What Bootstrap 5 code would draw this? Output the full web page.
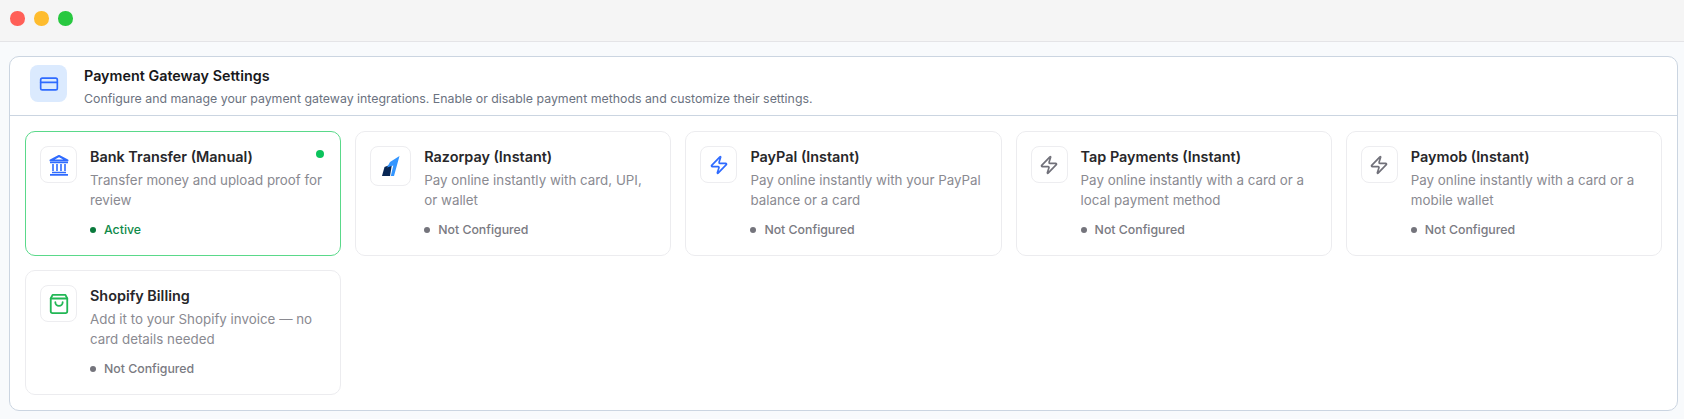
<!DOCTYPE html>
<html lang="en">
<head>
<meta charset="utf-8">
<title>Payment Gateway Settings</title>
<link href="https://cdn.jsdelivr.net/npm/bootstrap@5.3.0/dist/css/bootstrap.min.css" rel="stylesheet">
<style>
html,body{height:419px;overflow:hidden}
body{font-family:Inter,"Liberation Sans",sans-serif;background:#f8fafc;color:#1e1e24}
.chrome-bar{height:42px;background:#f5f5f5;border-bottom:1px solid #e4e4e7;padding:11px 0 0 10px;gap:9.500px}
.light{width:14.5px;height:14.5px;border-radius:50%}
.l-red{background:#ff5f57}.l-yellow{background:#febc2e}.l-green{background:#28c840}
.shell{margin:14px 6px 0 9px;height:355px;background:#fff;border:1px solid #cbd5e1;border-radius:10px;overflow:hidden}
.shell-head{height:59px;border-bottom:1px solid #cbd5e1;padding:8px 20px 0;gap:17px}
.head-icon{width:37px;height:37px;border-radius:8px;background:#dbeafe;color:#2f6bff;flex:none}
.head-title{font-size:14.35px;font-weight:600;line-height:20px;color:#18181b;margin-top:1px}
.head-desc{font-size:12.35px;line-height:18px;color:#6b7280;margin-top:4px}
.gw-grid{display:grid;grid-template-columns:repeat(5,1fr);gap:14px;padding:15px}
.gw{height:125px;border:1px solid #ececef;border-radius:10px;padding:14px;gap:13px;position:relative}
.gw-on{border:1.5px solid #5ad98a}
.gw-icon{width:37px;height:37px;border:1px solid #ededf0;border-radius:8px;flex:none}
.gw-icon-wide{width:41px;height:40px}
.gw-name{font-size:14.4px;font-weight:600;line-height:20px;color:#27272a;margin-top:1px}
.gw-desc{font-size:13.35px;line-height:19.5px;color:#8a8a91;margin-top:4px}
.gw-status{font-size:12.3px;font-weight:500;line-height:18px;color:#7a7a82;margin-top:11px;gap:8px}
.dot{width:6px;height:6px;border-radius:50%;background:#74747c}
.gw-status.on{color:#0f8a4a}.on .dot{background:#0a7a3c}
.live{position:absolute;top:18px;right:16px;width:8px;height:8px;border-radius:50%;background:#0cc35c}
.c-blue{color:#2f6bff}.c-gray{color:#71717a}.c-green{color:#22b755}
</style>
</head>
<body>
<div class="chrome-bar d-flex align-items-start">
  <span class="light l-red"></span><span class="light l-yellow"></span><span class="light l-green"></span>
</div>
<div class="shell">
  <div class="shell-head d-flex align-items-start">
    <div class="head-icon d-flex align-items-center justify-content-center">
      <svg width="20" height="20" viewBox="0 0 24 24" fill="none" stroke="currentColor" stroke-width="2" stroke-linecap="round" stroke-linejoin="round"><rect x="2" y="5" width="20" height="14" rx="2"/><path d="M2 10h20"/></svg>
    </div>
    <div>
      <div class="head-title">Payment Gateway Settings</div>
      <div class="head-desc">Configure and manage your payment gateway integrations. Enable or disable payment methods and customize their settings.</div>
    </div>
  </div>
  <div class="gw-grid">
    <div class="gw gw-on d-flex">
      <span class="live"></span>
      <div class="gw-icon c-blue d-flex align-items-center justify-content-center">
        <svg width="20" height="22" viewBox="0 0 20 22" fill="none" stroke="currentColor"><path d="M1.500 6.500 10 2l8.500 4.500z" stroke-width="2" stroke-linejoin="round"/><path d="M1 8.500h18" stroke-width="1.500"/><path d="M4 10v7M8 10v7M12 10v7M16 10v7" stroke-width="1.600"/><path d="M3 18.500h14" stroke-width="1.300"/><path d="M1 20.800h18" stroke-width="1.800"/></svg>
      </div>
      <div>
        <div class="gw-name">Bank Transfer (Manual)</div>
        <div class="gw-desc">Transfer money and upload proof for review</div>
        <div class="gw-status on d-flex align-items-center"><span class="dot"></span>Active</div>
      </div>
    </div>
    <div class="gw d-flex">
      <div class="gw-icon gw-icon-wide d-flex align-items-center justify-content-center">
        <svg width="20" height="22" viewBox="0 0 20 22"><path d="M1 21 3.500 12 11 9 9 21z" fill="#072654"/><path d="M18.500 1 13 21H9.800L12.300 10.500 6 12.500 9 7z" fill="#3395ff"/></svg>
      </div>
      <div>
        <div class="gw-name">Razorpay (Instant)</div>
        <div class="gw-desc">Pay online instantly with card, UPI, or wallet</div>
        <div class="gw-status d-flex align-items-center"><span class="dot"></span>Not Configured</div>
      </div>
    </div>
    <div class="gw d-flex">
      <div class="gw-icon c-blue d-flex align-items-center justify-content-center">
        <svg width="20" height="20" viewBox="0 0 24 24" fill="none" stroke="currentColor" stroke-width="2" stroke-linecap="round" stroke-linejoin="round"><path d="M4 14a1 1 0 0 1-.78-1.630l9.900-10.200a.500.500 0 0 1 .860.460l-1.920 6.020A1 1 0 0 0 13 10h7a1 1 0 0 1 .780 1.630l-9.900 10.200a.500.500 0 0 1-.860-.460l1.920-6.020A1 1 0 0 0 11 14z"/></svg>
      </div>
      <div>
        <div class="gw-name">PayPal (Instant)</div>
        <div class="gw-desc">Pay online instantly with your PayPal balance or a card</div>
        <div class="gw-status d-flex align-items-center"><span class="dot"></span>Not Configured</div>
      </div>
    </div>
    <div class="gw d-flex">
      <div class="gw-icon c-gray d-flex align-items-center justify-content-center">
        <svg width="20" height="20" viewBox="0 0 24 24" fill="none" stroke="currentColor" stroke-width="2" stroke-linecap="round" stroke-linejoin="round"><path d="M4 14a1 1 0 0 1-.78-1.630l9.900-10.200a.500.500 0 0 1 .860.460l-1.920 6.020A1 1 0 0 0 13 10h7a1 1 0 0 1 .780 1.630l-9.900 10.200a.500.500 0 0 1-.860-.460l1.920-6.020A1 1 0 0 0 11 14z"/></svg>
      </div>
      <div>
        <div class="gw-name">Tap Payments (Instant)</div>
        <div class="gw-desc">Pay online instantly with a card or a local payment method</div>
        <div class="gw-status d-flex align-items-center"><span class="dot"></span>Not Configured</div>
      </div>
    </div>
    <div class="gw d-flex">
      <div class="gw-icon c-gray d-flex align-items-center justify-content-center">
        <svg width="20" height="20" viewBox="0 0 24 24" fill="none" stroke="currentColor" stroke-width="2" stroke-linecap="round" stroke-linejoin="round"><path d="M4 14a1 1 0 0 1-.78-1.630l9.900-10.200a.500.500 0 0 1 .860.460l-1.920 6.020A1 1 0 0 0 13 10h7a1 1 0 0 1 .780 1.630l-9.900 10.200a.500.500 0 0 1-.860-.460l1.920-6.020A1 1 0 0 0 11 14z"/></svg>
      </div>
      <div>
        <div class="gw-name">Paymob (Instant)</div>
        <div class="gw-desc">Pay online instantly with a card or a mobile wallet</div>
        <div class="gw-status d-flex align-items-center"><span class="dot"></span>Not Configured</div>
      </div>
    </div>
    <div class="gw d-flex">
      <div class="gw-icon c-green d-flex align-items-center justify-content-center">
        <svg width="22" height="22" viewBox="0 0 24 24" fill="none" stroke="currentColor" stroke-width="2" stroke-linecap="round" stroke-linejoin="round"><path d="M5 2h14l2 4v14a2 2 0 0 1-2 2H5a2 2 0 0 1-2-2V6z"/><path d="M3 6h18M16 10a4 4 0 0 1-8 0"/></svg>
      </div>
      <div>
        <div class="gw-name">Shopify Billing</div>
        <div class="gw-desc">Add it to your Shopify invoice — no card details needed</div>
        <div class="gw-status d-flex align-items-center"><span class="dot"></span>Not Configured</div>
      </div>
    </div>
  </div>
</div>
<script src="https://cdn.jsdelivr.net/npm/bootstrap@5.3.0/dist/js/bootstrap.bundle.min.js"></script>
</body>
</html>
